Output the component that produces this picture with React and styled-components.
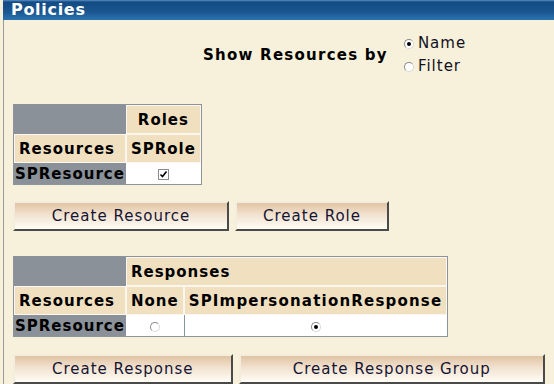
import React from "react";
import styled, { createGlobalStyle } from "styled-components";

const Global = createGlobalStyle`
  html, body { margin: 0; padding: 0; background: #f7f0da; }
  body { font-family: "DejaVu Sans", Verdana, sans-serif; color: #000; }
`;

const Panel = styled.div`
  margin-left: 3px;
  border-left: 1px solid #9a9a9a;
  min-height: 384px;
  box-sizing: border-box;
`;

const TitleBar = styled.div`
  height: 20px;
  margin-left: -1px;
  background: linear-gradient(to bottom, #5b8fc4 0px, #134b84 2px, #1a5690 12px, #2b73b0 20px);
  color: #fff;
  font-weight: bold;
  font-size: 16px;
  letter-spacing: 0.7px;
  line-height: 20px;
  padding-left: 8px;
`;

const Body = styled.div`
  padding: 0 9px;
`;

const ShowRow = styled.div`
  display: flex;
  align-items: center;
  padding-left: 190px;
  margin-top: 13px;
  gap: 16px;
`;

const ShowLabel = styled.span`
  font-weight: bold;
  font-size: 15px;
  letter-spacing: 1.25px;
`;

const RadioGroup = styled.div`
  display: flex;
  flex-direction: column;
  gap: 2px;
`;

const RadioLabel = styled.label`
  display: flex;
  align-items: center;
  gap: 4px;
  font-size: 15px;
  letter-spacing: 1px;
  line-height: 21px;
  color: #111122;
`;

const Radio = styled.span`
  width: 10px;
  height: 10px;
  box-sizing: border-box;
  border-radius: 50%;
  border: 1px solid #8a8a8a;
  border-right-color: #d8d8d8;
  border-bottom-color: #d8d8d8;
  background: #fff;
  display: inline-flex;
  align-items: center;
  justify-content: center;
  vertical-align: middle;
  &::after {
    content: "";
    width: 4px;
    height: 4px;
    border-radius: 50%;
    background: ${(p) => (p.$checked ? "#000" : "transparent")};
  }
`;

const Check = styled.span`
  display: inline-flex;
  width: 11px;
  height: 11px;
  box-sizing: border-box;
  border: 1px solid #8a8a8a;
  background: #fff;
  align-items: center;
  justify-content: center;
  vertical-align: middle;
`;

const Grid = styled.table`
  border-collapse: separate;
  border-spacing: 0;
  border: 1px solid #8d939a;
  background: #8a9198;
  margin-top: ${(p) => p.$top}px;
`;

const Corner = styled.td`
  background: #8a9198;
`;

const Head = styled.th`
  background: #f1e0c0;
  border: 1px solid #fbf7ee;
  font-size: 15px;
  letter-spacing: ${(p) => (p.$wide ? "1.2px" : "1px")};
  font-weight: bold;
  padding: 0 4px;
  height: 27px;
  text-align: ${(p) => (p.$left ? "left" : "center")};
`;

const RowHead = styled.th`
  background: #8a9198;
  font-size: 15px;
  letter-spacing: 1px;
  font-weight: bold;
  padding: 0 1px;
  height: 20px;
  text-align: left;
`;

const Cell = styled.td`
  background: #fff;
  text-align: center;
  border-left: ${(p) => (p.$sep ? "1px solid #8d939a" : "none")};
`;

const ButtonRow = styled.div`
  display: flex;
  gap: 6px;
  margin-top: ${(p) => p.$top}px;
`;

const Button = styled.button`
  width: ${(p) => p.$w}px;
  height: 30px;
  font-family: "DejaVu Sans", Verdana, sans-serif;
  font-size: 15px;
  letter-spacing: 1px;
  color: #141433;
  background: linear-gradient(to bottom, #e0c4a4 0%, #f2e2d0 45%, #fffdf5 100%);
  border: 2px solid;
  border-color: #f4ecdc #4a4a4a #4a4a4a #f4ecdc;
  padding: 0;
`;

export default function App() {
  return (
    <>
      <Global />
      <Panel>
        <TitleBar>Policies</TitleBar>
        <Body>
          <ShowRow>
            <ShowLabel>Show Resources by</ShowLabel>
            <RadioGroup>
              <RadioLabel><Radio $checked />Name</RadioLabel>
              <RadioLabel><Radio />Filter</RadioLabel>
            </RadioGroup>
          </ShowRow>
          <Grid $top={27}>
            <tbody>
              <tr>
                <Corner />
                <Head>Roles</Head>
              </tr>
              <tr>
                <Head $left>Resources</Head>
                <Head>SPRole</Head>
              </tr>
              <tr>
                <RowHead>SPResource</RowHead>
                <Cell>
                  <Check>
                    <svg width="9" height="9" viewBox="0 0 9 9">
                      <path d="M1.5 4.5 L3.5 6.5 L7.5 1.5" stroke="#000" strokeWidth="1.6" fill="none" />
                    </svg>
                  </Check>
                </Cell>
              </tr>
            </tbody>
          </Grid>
          <ButtonRow $top={16}>
            <Button $w={216}>Create Resource</Button>
            <Button $w={154}>Create Role</Button>
          </ButtonRow>
          <Grid $top={25}>
            <tbody>
              <tr>
                <Corner />
                <Head colSpan={2} $left>Responses</Head>
              </tr>
              <tr>
                <Head $left>Resources</Head>
                <Head>None</Head>
                <Head $wide>SPImpersonationResponse</Head>
              </tr>
              <tr>
                <RowHead>SPResource</RowHead>
                <Cell><Radio /></Cell>
                <Cell $sep><Radio $checked /></Cell>
              </tr>
            </tbody>
          </Grid>
          <ButtonRow $top={17}>
            <Button $w={222}>Create Response</Button>
            <Button $w={310}>Create Response Group</Button>
          </ButtonRow>
        </Body>
      </Panel>
    </>
  );
}
